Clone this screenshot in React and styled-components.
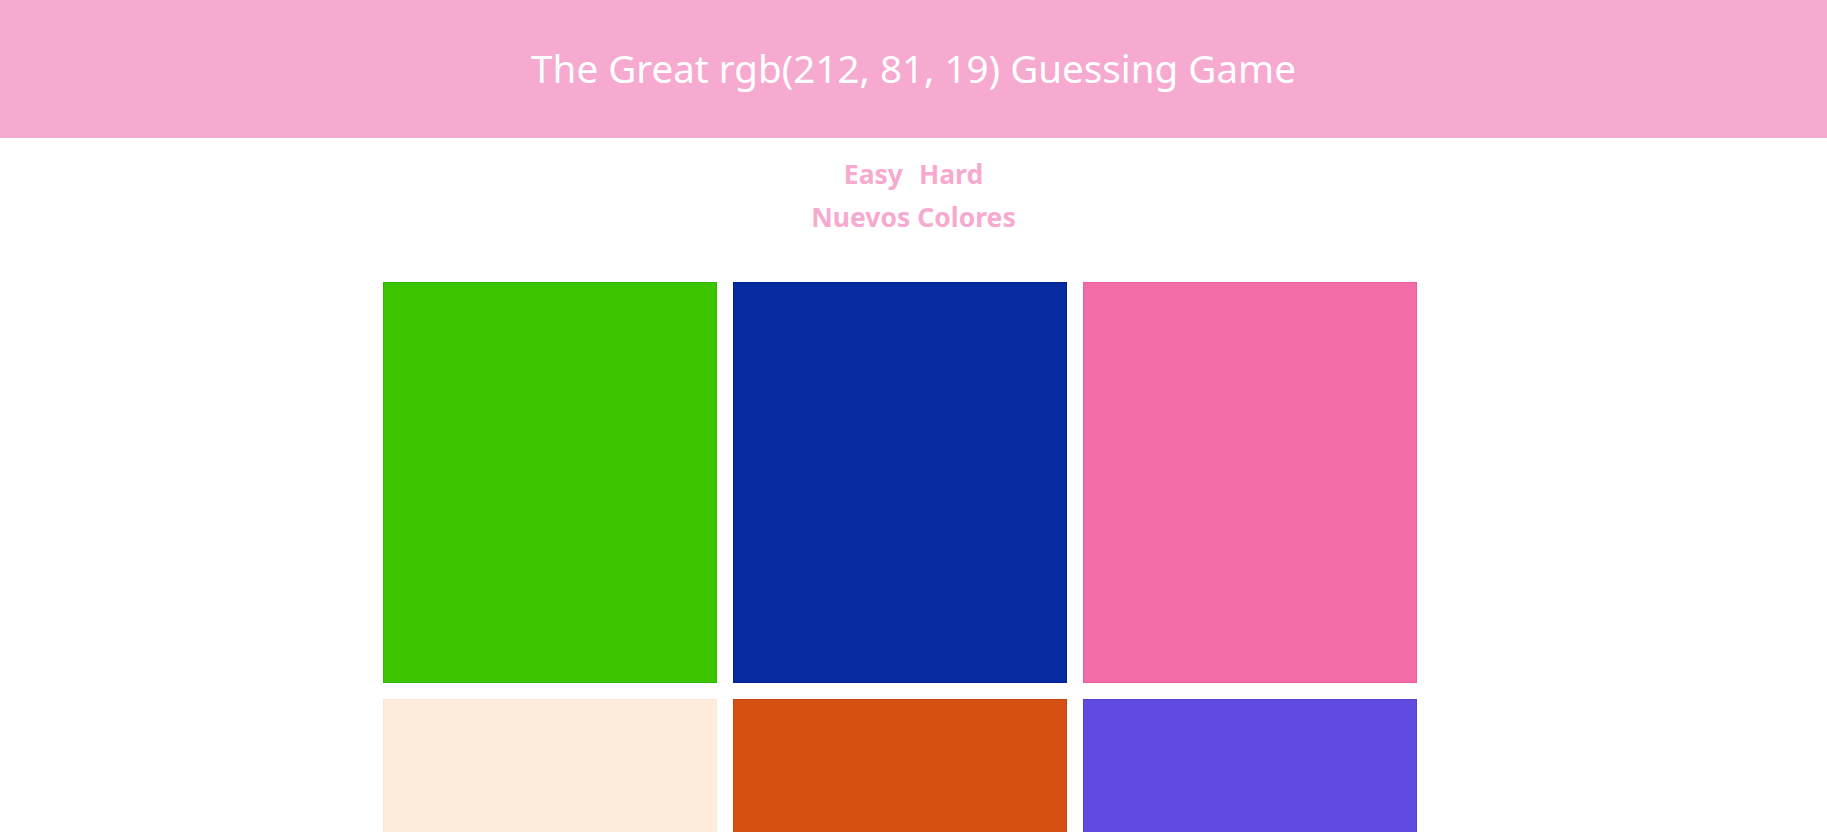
import React from "react";
import styled, { createGlobalStyle } from "styled-components";

const Global = createGlobalStyle`
  html, body { margin: 0; padding: 0; background: #ffffff; }
  body { font-family: "Noto Sans", "Open Sans", sans-serif; }
`;

const Header = styled.header`
  height: 138px;
  background: #f7aacf;
  display: flex;
  align-items: flex-start;
  justify-content: center;
`;

const Title = styled.h1`
  margin: 0;
  padding-top: 43px;
  font-size: 38.6px;
  line-height: 50px;
  font-weight: 400;
  color: #ffffff;
`;

const Controls = styled.div`
  display: flex;
  flex-direction: column;
  align-items: center;
  padding-top: 15px;
`;

const Row = styled.div`
  display: flex;
  justify-content: center;
  gap: 12px;
`;

const TextButton = styled.button`
  border: none;
  background: none;
  padding: 0 2px;
  font-family: "Noto Sans", "Open Sans", sans-serif;
  font-weight: 700;
  font-size: 26.5px;
  line-height: 43px;
  color: #f7aacf;
  cursor: pointer;
`;

const Board = styled.div`
  display: grid;
  grid-template-columns: repeat(3, 334px);
  grid-auto-rows: 401px;
  gap: 16px;
  width: 1034px;
  margin: 43px auto 0;
  padding-right: 28px;
`;

const Square = styled.div`
  background: ${(p) => p.$color};
  box-shadow: inset 0 0 0 1px ${(p) => p.$edge};
`;

const squares = [
  ["#3cc500", "#2fb800"],
  ["#062aa0", "#04208a"],
  ["#f26ca7", "#ee5e9e"],
  ["#fdecdc", "#f8e6d6"],
  ["#d45113", "#c94810"],
  ["#604be1", "#5440d8"],
];

export default function App() {
  return (
    <>
      <Global />
      <Header>
        <Title>The Great rgb(212, 81, 19) Guessing Game</Title>
      </Header>
      <Controls>
        <Row>
          <TextButton>Easy</TextButton>
          <TextButton>Hard</TextButton>
        </Row>
        <TextButton>Nuevos Colores</TextButton>
      </Controls>
      <Board>
        {squares.map(([c, e], i) => (
          <Square key={i} $color={c} $edge={e} />
        ))}
      </Board>
    </>
  );
}
